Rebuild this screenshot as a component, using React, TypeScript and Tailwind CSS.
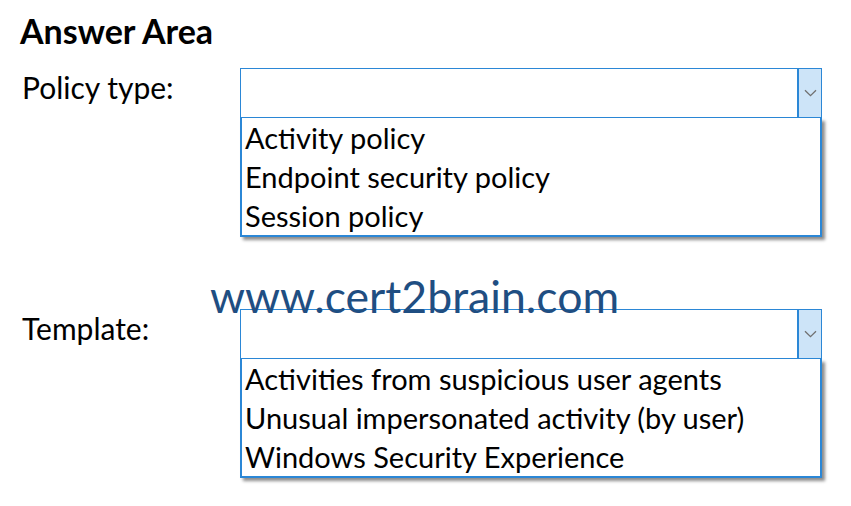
const font = { fontFamily: "Lato, 'Open Sans', sans-serif" };

type Field = { label: string; options: string[] };

const fields: Field[] = [
  { label: "Policy type:", options: ["Activity policy", "Endpoint security policy", "Session policy"] },
  {
    label: "Template:",
    options: [
      "Activities from suspicious user agents",
      "Unusual impersonated activity (by user)",
      "Windows Security Experience",
    ],
  },
];

function Chevron() {
  return (
    <svg width="13" height="8" viewBox="0 0 13 8" fill="none">
      <path d="M1 1.2l5.5 5.5 5.5-5.5" stroke="#707070" strokeWidth="1.3" />
    </svg>
  );
}

function Dropdown({ options }: { options: string[] }) {
  return (
    <div className="w-[582px]">
      <div className="flex h-[50px] border border-[#2b87d6] bg-white">
        <div className="flex-1" />
        <div className="flex w-[24px] items-center justify-center border-l-2 border-[#2b87d6] bg-[#cde4f8]">
          <Chevron />
        </div>
      </div>
      <div className="flex flex-col border-2 border-t-0 border-[#2b87d6] bg-white pl-[3px] shadow-[3px_3px_3px_rgba(0,0,0,0.45)]">
        {options.map((o) => (
          <div key={o} className="h-[39px] whitespace-nowrap text-[29px] leading-[40px] text-black">
            {o}
          </div>
        ))}
      </div>
    </div>
  );
}

export default function App() {
  return (
    <div className="relative h-[506px] w-[851px] bg-white pt-[11px] pl-[20px]" style={font}>
      <div className="h-[39px] text-[34px] font-bold leading-[39px] text-black">Answer Area</div>
      <div className="mt-[18px] flex flex-col gap-[72px]">
        {fields.map((f) => (
          <div key={f.label} className="flex">
            <div className="w-[220px] pl-[2px] text-[30px] leading-[38px] text-black">{f.label}</div>
            <Dropdown options={f.options} />
          </div>
        ))}
      </div>
      <div className="absolute top-[274px] left-[210px] whitespace-nowrap text-[44.6px] leading-[44px] text-[#1f4e82]">
        www.cert2brain.com
      </div>
    </div>
  );
}
